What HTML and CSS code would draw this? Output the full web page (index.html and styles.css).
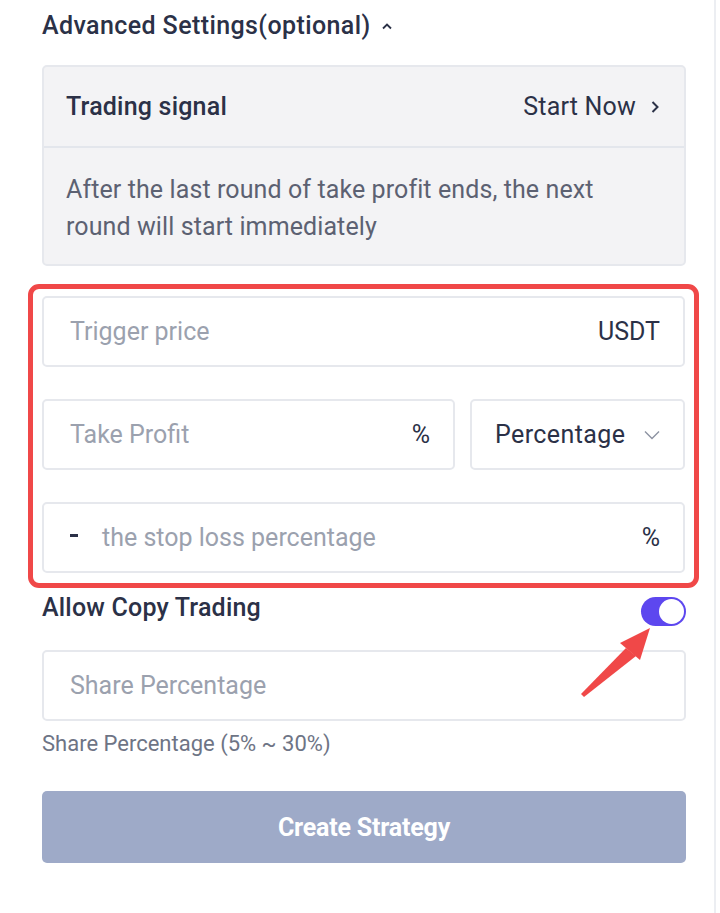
FILE: index.html
```html
<!DOCTYPE html>
<html lang="en">
<head>
    <meta charset="UTF-8">
    <meta name="viewport" content="width=device-width, initial-scale=1.0">
    <title>Create Strategy</title>
    <link rel="stylesheet" href="styles.css">
</head>
<body>

    <div class="panel">

        <div class="adv-title">
            Advanced Settings(optional)
            <svg class="caret" width="12" height="8" viewBox="0 0 12 8"><path d="M2 6.5l4-4 4 4" fill="none" stroke="#2b3147" stroke-width="1.8"/></svg>
        </div>

        <div class="signal-card">
            <div class="signal-head">
                <span class="signal-name">Trading signal</span>
                <span class="signal-link">Start Now
                    <svg width="10" height="14" viewBox="0 0 10 14"><path d="M2.5 2l5 5-5 5" fill="none" stroke="#2b3147" stroke-width="2"/></svg>
                </span>
            </div>
            <div class="signal-desc">After the last round of take profit ends, the next round will start immediately</div>
        </div>

        <div class="mark-box">
            <div class="field">
                <span class="ph">Trigger price</span>
                <span class="unit">USDT</span>
            </div>
            <div class="field-row">
                <div class="field grow">
                    <span class="ph">Take Profit</span>
                    <span class="unit">%</span>
                </div>
                <div class="field select">
                    <span class="val">Percentage</span>
                    <svg width="18" height="10" viewBox="0 0 18 10"><path d="M2 1.5l7 7 7-7" fill="none" stroke="#8d93a2" stroke-width="1.4"/></svg>
                </div>
            </div>
            <div class="field">
                <span class="minus"></span>
                <span class="ph">the stop loss percentage</span>
                <span class="unit">%</span>
            </div>
        </div>

        <div class="copy-row">
            <span class="copy-label">Allow Copy Trading</span>
            <span class="toggle"><span class="knob"></span></span>
            <svg class="arrow" width="80" height="80" viewBox="0 0 80 80">
                <polygon points="72,6 42,21 62,38" fill="#f04848"/>
                <polygon points="48,26 58,34 6,75 3,72" fill="#f04848"/>
            </svg>
        </div>

        <div class="field share">
            <span class="ph">Share Percentage</span>
        </div>
        <div class="hint">Share Percentage (5% ~ 30%)</div>

        <button class="create-btn">Create Strategy</button>

    </div>

</body>
</html>
```

FILE: styles.css
```css
* {
    box-sizing: border-box;
}

body {
    margin: 0;
    background: #fff;
    font-family: "Roboto", "Liberation Sans", sans-serif;
    color: #2b3147;
}

.panel {
    width: 716px;
    min-height: 913px;
    padding: 11px 28px 0 42px;
    border-right: 2px solid #eceef2;
}

.adv-title {
    font-size: 25px;
    font-weight: 500;
    letter-spacing: 0.4px;
    height: 30px;
    line-height: 30px;
    display: flex;
    align-items: center;
    gap: 10px;
}

.signal-card {
    margin-top: 24px;
    background: #f3f3f5;
    border: 2px solid #e6e8ed;
    border-radius: 5px;
}

.signal-head {
    height: 81px;
    display: flex;
    align-items: center;
    justify-content: space-between;
    padding: 0 24px 0 22px;
    border-bottom: 2px solid #e3e6ec;
    font-size: 25px;
    font-weight: 500;
    letter-spacing: 0.2px;
}

.signal-link {
    display: flex;
    align-items: center;
    gap: 14px;
    font-weight: 400;
}

.signal-desc {
    padding: 23px 60px 19px 22px;
    font-size: 25px;
    line-height: 37px;
    color: #5c6172;
    letter-spacing: 0.1px;
}

.mark-box {
    margin: 18px -13px 0 -14px;
    padding: 7px 9px 10px 9px;
    border: 5px solid #f04848;
    border-radius: 11px;
    display: flex;
    flex-direction: column;
    gap: 32px;
}

.field {
    height: 71px;
    border: 2px solid #e6e8ed;
    border-radius: 5px;
    display: flex;
    align-items: center;
    padding: 0 23px 0 26px;
    font-size: 25px;
}

.field-row {
    display: flex;
    gap: 15px;
}

.grow {
    flex: 1;
}

.ph {
    flex: 1;
    color: #9ba1ae;
}

.unit {
    color: #2b3147;
}

.select {
    width: 215px;
    padding: 0 22px 0 23px;
    justify-content: space-between;
    letter-spacing: 0.4px;
}

.val {
    color: #2b3147;
}

.minus {
    width: 8px;
    height: 3px;
    background: #2b3147;
    margin: 0 24px 4px 0;
}

.copy-row {
    position: relative;
    margin-top: 9px;
    height: 28px;
    display: flex;
    align-items: center;
    justify-content: space-between;
}

.copy-label {
    font-size: 25px;
    font-weight: 500;
    letter-spacing: 0.2px;
    margin-top: -8px;
}

.toggle {
    width: 45px;
    height: 29px;
    border-radius: 15px;
    background: #5d47ef;
    display: flex;
    align-items: center;
    justify-content: flex-end;
    padding: 2px;
}

.knob {
    width: 25px;
    height: 25px;
    border-radius: 50%;
    background: #fff;
}

.arrow {
    position: absolute;
    left: 536px;
    top: 25px;
}

.share {
    margin-top: 25px;
    height: 71px;
}

.hint {
    margin-top: 10px;
    font-size: 22px;
    line-height: 26px;
    color: #6e7485;
}

.create-btn {
    display: block;
    width: 100%;
    height: 72px;
    margin-top: 34px;
    border: none;
    border-radius: 5px;
    background: #9eaac8;
    color: #fff;
    font-family: inherit;
    font-size: 25px;
    font-weight: 700;
    letter-spacing: -0.2px;
}
```
